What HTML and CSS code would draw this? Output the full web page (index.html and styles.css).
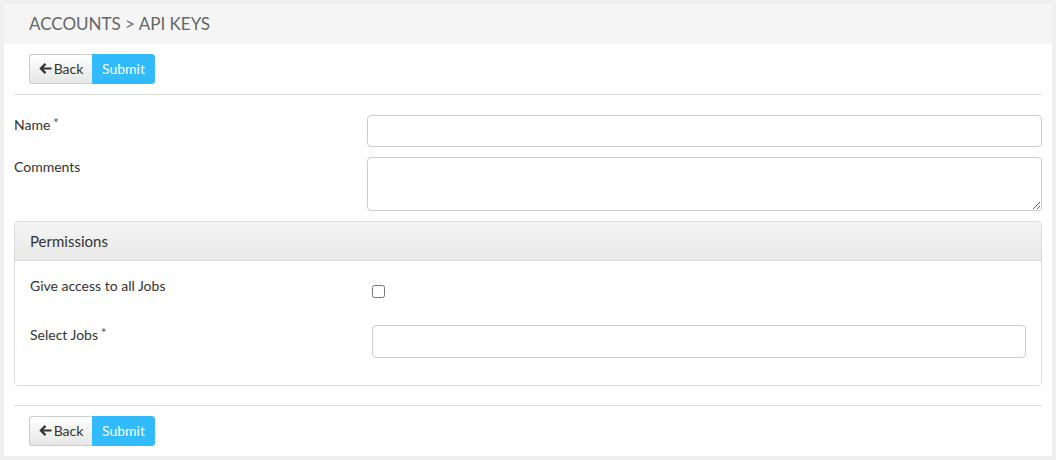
FILE: index.html
```html
<!DOCTYPE html>
<html lang="en">
<head>
  <meta charset="UTF-8" />
  <meta name="viewport" content="width=device-width, initial-scale=1.0" />
  <title>Accounts - API Keys</title>
  <link rel="stylesheet" href="styles.css">
</head>
<body>
  <div class="card">
    <div class="card-header">ACCOUNTS &gt; API KEYS</div>
    <div class="card-body">
      <div class="toolbar">
        <div class="btn-group">
          <button class="btn btn-default">
            <svg class="icon" viewBox="0 0 14 14" width="13" height="13"><path d="M13.5 7H2.5M7 2L2 7l5 5" fill="none" stroke="#333" stroke-width="2.4"/></svg>Back
          </button>
          <button class="btn btn-primary">Submit</button>
        </div>
      </div>
      <hr>

      <div class="form-row">
        <label>Name<sup>*</sup></label>
        <input type="text" class="form-control">
      </div>
      <div class="form-row">
        <label>Comments</label>
        <textarea class="form-control textarea"></textarea>
      </div>

      <div class="panel">
        <div class="panel-heading">Permissions</div>
        <div class="panel-body">
          <div class="form-row check-row">
            <label>Give access to all Jobs</label>
            <div><input type="checkbox" class="checkbox"></div>
          </div>
          <div class="form-row">
            <label>Select Jobs<sup>*</sup></label>
            <input type="text" class="form-control select">
          </div>
        </div>
      </div>

      <hr class="bottom">
      <div class="toolbar">
        <div class="btn-group">
          <button class="btn btn-default">
            <svg class="icon" viewBox="0 0 14 14" width="13" height="13"><path d="M13.5 7H2.5M7 2L2 7l5 5" fill="none" stroke="#333" stroke-width="2.4"/></svg>Back
          </button>
          <button class="btn btn-primary">Submit</button>
        </div>
      </div>
    </div>
  </div>
</body>
</html>
```

FILE: styles.css
```css
body { font-family: Lato, "Open Sans", sans-serif; margin: 0; padding: 4px; background: #efefef; color: #333; font-size: 14px; }
.card { background: #fff; height: 452px; box-sizing: border-box; }
.card-header { background: #f5f5f5; height: 40px; line-height: 40px; padding: 0 25px; font-size: 17px; color: #666; }
.card-body { padding: 0 10px 10px; }
.toolbar { padding: 10px 15px; }
.btn-group { display: flex; }
.btn { font-family: inherit; font-size: 14px; height: 30px; width: 63px; padding: 0 0 1px; border: 1px solid #ccc; cursor: pointer; display: flex; align-items: center; justify-content: center; }
.btn-default { background: linear-gradient(#fff, #e6e6e6); color: #333; border-radius: 3px 0 0 3px; border-right: none; }
.btn-primary { background: #31bbfd; border-color: #31bbfd; color: #fff; border-radius: 0 3px 3px 0; }
.icon { margin-right: 2px; }
hr { border: none; border-top: 1px solid #ddd; margin: 0 0 20px; }
hr.bottom { margin: 19px 0 0; }
.form-row { display: grid; grid-template-columns: calc((100% + 30px) / 3 - 30px) 1fr; column-gap: 30px; margin-bottom: 10px; }
label { line-height: 20px; padding-top: 0; }
sup { font-size: 13px; color: #555; vertical-align: top; position: relative; top: -2px; margin-left: 3px; }
.form-control { box-sizing: border-box; height: 32px; border: 1px solid #ccc; border-radius: 4px; font-family: inherit; }
.textarea { height: 54px; resize: vertical; }
.select { height: 33px; }
.panel { border: 1px solid #ddd; border-radius: 4px; margin-top: 10px; }
.panel-heading { background: linear-gradient(#f5f5f5, #e8e8e8); border-bottom: 1px solid #ddd; height: 38px; line-height: 38px; padding: 0 15px; font-size: 15px; border-radius: 3px 3px 0 0; }
.panel-body { padding: 15px 15px 17px; }
.check-row { height: 39px; }
.checkbox { margin: 9px 0 0 0; width: 13px; height: 13px; }
```
